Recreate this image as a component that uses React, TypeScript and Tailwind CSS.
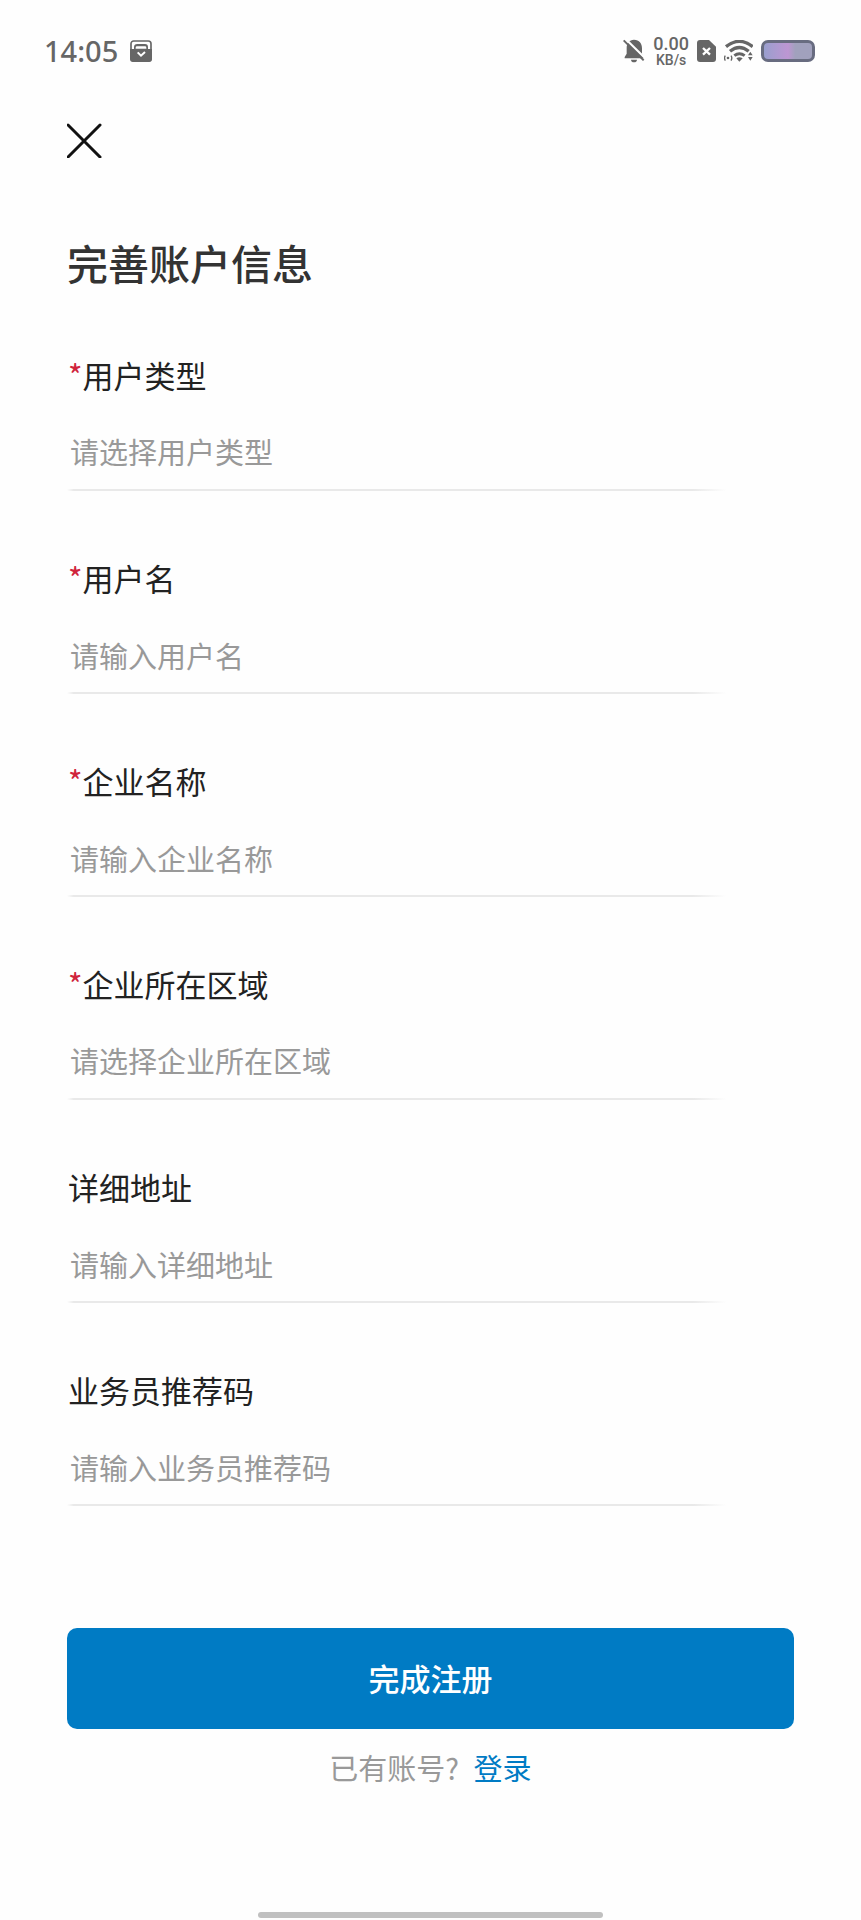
import { useState } from "react";

type Field = {
  id: string;
  label: string;
  placeholder: string;
  required?: boolean;
  options?: string[];
};

const fields: Field[] = [
  { id: "userType", label: "用户类型", placeholder: "请选择用户类型", required: true, options: ["企业", "个人"] },
  { id: "userName", label: "用户名", placeholder: "请输入用户名", required: true },
  { id: "companyName", label: "企业名称", placeholder: "请输入企业名称", required: true },
  { id: "region", label: "企业所在区域", placeholder: "请选择企业所在区域", required: true, options: ["华东", "华南", "华北"] },
  { id: "address", label: "详细地址", placeholder: "请输入详细地址" },
  { id: "referralCode", label: "业务员推荐码", placeholder: "请输入业务员推荐码" },
];

function StatusBar() {
  return (
    <header className="flex h-[102px] items-center justify-between pr-[46px] pl-11 text-[#666]">
      <div className="flex items-center gap-3">
        <span className="font-['Noto_Sans'] text-[29px] leading-8 font-medium">14:05</span>
        <svg className="h-[22px] w-[22px]" viewBox="0 0 66 66" aria-hidden="true">
          <rect x="3" y="3" width="60" height="60" rx="8" fill="none" stroke="currentColor" strokeWidth="5" />
          <path d="M0 27H12V22Q12 12 22 12H45Q54 12 54 22V27H66V57Q66 66 57 66H9Q0 66 0 57Z" fill="currentColor" />
          <path d="M17 26V23Q17 19 21 19H45Q49 19 49 23V26Z" fill="#fff" />
          <path d="M23 37L33 47L45 36" fill="none" stroke="#fff" strokeWidth="6" />
        </svg>
      </div>

      <div className="flex items-center gap-2">
        {/* Muted bell */}
        <svg className="h-6 w-[22px]" viewBox="0 0 66 72" aria-hidden="true">
          <path d="M33 2C49 2 57 13 57 28V44L63 54V58H5V54L11 44V26C11 13 19 2 33 2Z" fill="currentColor" />
          <path d="M24 62H42Q41 70 33 70Q25 70 24 62Z" fill="currentColor" />
          <path d="M7 -1L70 61" stroke="#fff" strokeWidth="6" />
          <path d="M2 4L62 64" stroke="currentColor" strokeWidth="6" />
        </svg>

        <div className="flex flex-col items-center font-['Roboto'] font-medium">
          <span className="text-[18px] leading-[17px]">0.00</span>
          <span className="text-[14px] leading-4">KB/s</span>
        </div>

        {/* SIM */}
        <svg className="h-[22px] w-[19px]" viewBox="0 0 57 66" aria-hidden="true">
          <path d="M9 0H36L57 20V57Q57 66 48 66H9Q0 66 0 57V9Q0 0 9 0Z" fill="currentColor" />
          <path d="M18 24L39 44M39 24L18 44" stroke="#fff" strokeWidth="7" />
        </svg>

        {/* Wifi */}
        <svg className="h-[22px] w-[29px]" viewBox="0 0 87 66" fill="none" stroke="currentColor" aria-hidden="true">
          <path d="M6 20Q46 -12 86 20" strokeWidth="10" />
          <path d="M18 34Q46 11 74 34" strokeWidth="10" />
          <path d="M31 47Q46 35 62 47" strokeWidth="9" />
          <path d="M37 55Q46 48 56 55L46 65Z" fill="currentColor" stroke="none" />
          <path d="M4 47Q-1 54 4 62M21 47Q26 54 21 62" strokeWidth="4" />
          <circle cx="12" cy="54" r="4" fill="currentColor" stroke="none" />
          <path d="M72 46L79 35L86 46ZM72 51L79 62L86 51Z" fill="currentColor" stroke="none" />
        </svg>

        <div className="h-[22px] w-[54px] rounded-[7px] border-[3px] border-[#686c80] bg-linear-to-r from-[#999fce] via-[#bd96d3] via-50% to-[#a1a1bd] to-65%" />
      </div>
    </header>
  );
}

function FormField({ field }: { field: Field }) {
  const [value, setValue] = useState("");

  return (
    <div>
      <label htmlFor={field.id} className="block pl-px text-[31px] leading-9 text-[#222]">
        {field.required && <span className="text-[#d0243c]">*</span>}
        {field.label}
      </label>
      {field.options ? (
        <select
          id={field.id}
          value={value}
          onChange={(e) => setValue(e.target.value)}
          className="mt-6 block h-[72px] w-full appearance-none bg-transparent pb-[2px] pl-[3px] text-[29px] text-[#999] outline-none"
        >
          <option value="">{field.placeholder}</option>
          {field.options.map((option) => (
            <option key={option} value={option}>
              {option}
            </option>
          ))}
        </select>
      ) : (
        <input
          id={field.id}
          type="text"
          value={value}
          onChange={(e) => setValue(e.target.value)}
          placeholder={field.placeholder}
          className="mt-6 block h-[72px] w-full bg-transparent pb-[2px] pl-[3px] text-[29px] text-[#222] outline-none placeholder:text-[#999]"
        />
      )}
      <div className="h-[2px] w-11/12 bg-[linear-gradient(to_right,transparent,#e9e9e9_1%,#e9e9e9_94%,transparent_99%)]" />
    </div>
  );
}

export default function App() {
  return (
    <div
      lang="zh-CN"
      className="flex min-h-screen flex-col bg-[#fefefe] font-['Noto_Sans_CJK_SC',sans-serif]"
    >
      <StatusBar />

      <main className="px-[67px]">
        <button type="button" aria-label="关闭" className="mt-5 block h-9 w-9">
          <svg className="h-9 w-9" viewBox="0 0 36 36" aria-hidden="true">
            <path d="M1 3L33 35M33 3L1 35" stroke="#111" strokeWidth="3" strokeLinecap="round" />
          </svg>
        </button>

        <h1 className="mt-[74px] text-[41px] leading-[60px] font-medium text-[#333]">完善账户信息</h1>

        <form className="mt-[65px]" onSubmit={(e) => e.preventDefault()}>
          <div className="flex flex-col gap-[69px]">
            {fields.map((field) => (
              <FormField key={field.id} field={field} />
            ))}
          </div>

          <button
            type="submit"
            className="mt-[122px] block h-[101px] w-full rounded-[10px] bg-[#007bc4] text-[31px] font-medium text-white"
          >
            完成注册
          </button>
        </form>

        <p className="mt-[18px] text-center text-[29px] leading-10 text-[#999]">
          已有账号?{" "}
          <a href="#login" className="ml-2 text-[#007bc4]">
            登录
          </a>
        </p>
      </main>

      {/* Home indicator */}
      <div className="mx-auto mt-auto mb-[2px] h-[6px] w-2/5 rounded-full bg-[#c0c0c0]" />
    </div>
  );
}
